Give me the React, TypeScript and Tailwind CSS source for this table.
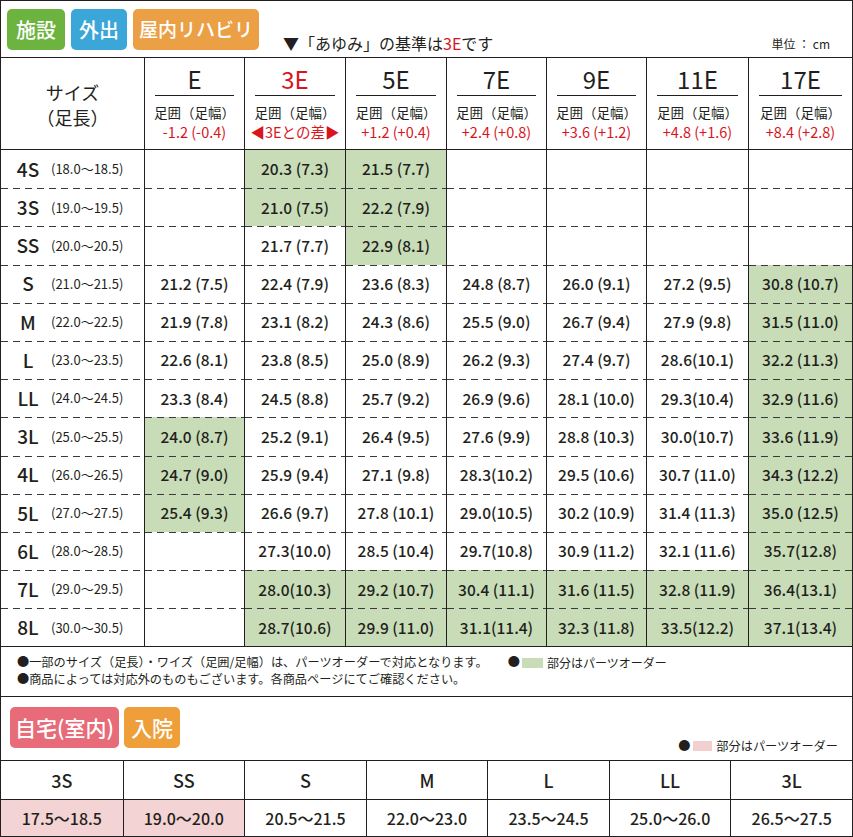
import React from "react";

const FONT = { fontFamily: '"Noto Sans CJK JP", "Noto Sans", sans-serif' };

const cols = ["E", "3E", "5E", "7E", "9E", "11E", "17E"];
const diffs = ["-1.2 (-0.4)", "◀3Eとの差▶", "+1.2 (+0.4)", "+2.4 (+0.8)", "+3.6 (+1.2)", "+4.8 (+1.6)", "+8.4 (+2.8)"];

type Cell = [string, boolean];
const rows: { size: string; range: string; cells: Cell[] }[] = [
  { size: "4S", range: "(18.0〜18.5)", cells: [["", false], ["20.3 (7.3)", true], ["21.5 (7.7)", true], ["", false], ["", false], ["", false], ["", false]] },
  { size: "3S", range: "(19.0〜19.5)", cells: [["", false], ["21.0 (7.5)", true], ["22.2 (7.9)", true], ["", false], ["", false], ["", false], ["", false]] },
  { size: "SS", range: "(20.0〜20.5)", cells: [["", false], ["21.7 (7.7)", false], ["22.9 (8.1)", true], ["", false], ["", false], ["", false], ["", false]] },
  { size: "S", range: "(21.0〜21.5)", cells: [["21.2 (7.5)", false], ["22.4 (7.9)", false], ["23.6 (8.3)", false], ["24.8 (8.7)", false], ["26.0 (9.1)", false], ["27.2 (9.5)", false], ["30.8 (10.7)", true]] },
  { size: "M", range: "(22.0〜22.5)", cells: [["21.9 (7.8)", false], ["23.1 (8.2)", false], ["24.3 (8.6)", false], ["25.5 (9.0)", false], ["26.7 (9.4)", false], ["27.9 (9.8)", false], ["31.5 (11.0)", true]] },
  { size: "L", range: "(23.0〜23.5)", cells: [["22.6 (8.1)", false], ["23.8 (8.5)", false], ["25.0 (8.9)", false], ["26.2 (9.3)", false], ["27.4 (9.7)", false], ["28.6(10.1)", false], ["32.2 (11.3)", true]] },
  { size: "LL", range: "(24.0〜24.5)", cells: [["23.3 (8.4)", false], ["24.5 (8.8)", false], ["25.7 (9.2)", false], ["26.9 (9.6)", false], ["28.1 (10.0)", false], ["29.3(10.4)", false], ["32.9 (11.6)", true]] },
  { size: "3L", range: "(25.0〜25.5)", cells: [["24.0 (8.7)", true], ["25.2 (9.1)", false], ["26.4 (9.5)", false], ["27.6 (9.9)", false], ["28.8 (10.3)", false], ["30.0(10.7)", false], ["33.6 (11.9)", true]] },
  { size: "4L", range: "(26.0〜26.5)", cells: [["24.7 (9.0)", true], ["25.9 (9.4)", false], ["27.1 (9.8)", false], ["28.3(10.2)", false], ["29.5 (10.6)", false], ["30.7 (11.0)", false], ["34.3 (12.2)", true]] },
  { size: "5L", range: "(27.0〜27.5)", cells: [["25.4 (9.3)", true], ["26.6 (9.7)", false], ["27.8 (10.1)", false], ["29.0(10.5)", false], ["30.2 (10.9)", false], ["31.4 (11.3)", false], ["35.0 (12.5)", true]] },
  { size: "6L", range: "(28.0〜28.5)", cells: [["", false], ["27.3(10.0)", false], ["28.5 (10.4)", false], ["29.7(10.8)", false], ["30.9 (11.2)", false], ["32.1 (11.6)", false], ["35.7(12.8)", true]] },
  { size: "7L", range: "(29.0〜29.5)", cells: [["", false], ["28.0(10.3)", true], ["29.2 (10.7)", true], ["30.4 (11.1)", true], ["31.6 (11.5)", true], ["32.8 (11.9)", true], ["36.4(13.1)", true]] },
  { size: "8L", range: "(30.0〜30.5)", cells: [["", false], ["28.7(10.6)", true], ["29.9 (11.0)", true], ["31.1(11.4)", true], ["32.3 (11.8)", true], ["33.5(12.2)", true], ["37.1(13.4)", true]] },
];

const bottom = [
  ["3S", "17.5〜18.5", true],
  ["SS", "19.0〜20.0", true],
  ["S", "20.5〜21.5", false],
  ["M", "22.0〜23.0", false],
  ["L", "23.5〜24.5", false],
  ["LL", "25.0〜26.0", false],
  ["3L", "26.5〜27.5", false],
] as const;

const dash =
  "bg-[image:repeating-linear-gradient(to_right,#3a3a3a_0px,#3a3a3a_7px,transparent_7px,transparent_12px)] bg-[length:100%_1px] bg-no-repeat bg-top";

const gridCols = "grid grid-cols-[143px_100px_101px_101px_100px_100px_102px_minmax(0,1fr)]";

export default function App() {
  return (
    <div style={FONT} className="w-[853px] h-[837px] bg-white text-[#231f20] overflow-hidden">
      <div className="w-[853px] h-[837px] border border-[#231f20] flex flex-col">
        {/* top tabs */}
        <div className="h-[56px] flex items-start px-[6px] pt-[8px] shrink-0">
          <div className="h-[41px] px-[9px] rounded-[5px] bg-[#6cb33f] text-white text-[20px] font-medium flex items-center">施設</div>
          <div className="h-[41px] px-[8px] ml-[6px] rounded-[5px] bg-[#3aa7d8] text-white text-[20px] font-medium flex items-center">外出</div>
          <div className="h-[41px] px-[6px] ml-[6px] rounded-[5px] bg-[#eba045] text-white text-[19px] font-medium flex items-center whitespace-nowrap">屋内リハビリ</div>
          <div className="ml-[24px] mt-[23px] text-[16px] leading-[22px] whitespace-nowrap">
            ▼「あゆみ」の基準は<span className="text-[#d9141c]">3E</span>です
          </div>
          <div className="ml-auto mr-[16px] mt-[27px] text-[12px] leading-[16px] whitespace-nowrap">単位 ： cm</div>
        </div>

        {/* main table */}
        <div className="border-t border-[#231f20] shrink-0">
          <div className={`${gridCols} h-[91px]`}>
            <div className="flex flex-col items-center justify-center pt-[3px] text-[18px] leading-[25px]">
              <div>サイズ</div>
              <div>（足長）</div>
            </div>
            {cols.map((c, i) => (
              <div key={c} className="border-l border-[#231f20] flex flex-col items-center px-[10px] pt-[6px]">
                <div className={`text-[24px] leading-[29px] ${i === 1 ? "text-[#d9141c]" : ""}`}>{c}</div>
                <div className="w-full h-px bg-[#231f20] mt-[2px]" />
                <div className="text-[13.5px] leading-[18px] mt-[7px] whitespace-nowrap">足囲（足幅）</div>
                <div className="text-[14.5px] leading-[18px] mt-[2px] text-[#d9141c] whitespace-nowrap">{diffs[i]}</div>
              </div>
            ))}
          </div>
          <div className="border-t border-[#231f20]">
            {rows.map((r, ri) => (
              <div key={r.size} className={`${gridCols} h-[38.2px]`}>
                <div className={`flex items-center ${ri > 0 ? dash : ""}`}>
                  <div className="w-[46px] pl-[8px] text-center text-[19px] font-medium">{r.size}</div>
                  <div className="text-[13px] ml-[4px] whitespace-nowrap">{r.range}</div>
                </div>
                {r.cells.map(([v, g], ci) => (
                  <div
                    key={ci}
                    className={`border-l border-[#231f20] flex items-center justify-center text-[15.5px] font-medium whitespace-pre ${g ? "bg-[#c8ddb7]" : ""} ${ri > 0 ? dash : ""}`}
                  >
                    {v}
                  </div>
                ))}
              </div>
            ))}
          </div>
        </div>

        {/* notes */}
        <div className="border-t border-[#231f20] h-[50px] shrink-0 pl-[16px] pt-[7px] text-[12.2px] leading-[17px]">
          <div className="flex items-center whitespace-nowrap">
            <span>●一部のサイズ（足長）・ワイズ（足囲/足幅）は、パーツオーダーで対応となります。</span>
            <span className="ml-[20px] flex items-center">
              ●<span className="inline-block w-[21px] h-[10px] bg-[#c8ddb7] ml-[2px] mr-[4px]" />
              <span className="text-[12px]">部分はパーツオーダー</span>
            </span>
          </div>
          <div className="whitespace-nowrap">●商品によっては対応外のものもございます。各商品ページにてご確認ください。</div>
        </div>

        {/* second tabs */}
        <div className="border-t border-[#231f20] h-[64px] shrink-0 flex items-start px-[9px] pt-[10px]">
          <div className="h-[41px] px-[5px] rounded-[5px] bg-[#e76b79] text-white text-[21px] font-medium flex items-center whitespace-nowrap">自宅(室内)</div>
          <div className="h-[41px] px-[7px] ml-[5px] rounded-[5px] bg-[#ee9f3a] text-white text-[21px] font-medium flex items-center">入院</div>
          <div className="ml-auto mr-[5px] mt-[31px] flex items-center text-[12.2px] leading-[16px] whitespace-nowrap">
            ●<span className="inline-block w-[19px] h-[10px] bg-[#f3cfcf] ml-[3px] mr-[4px]" />
            <span>部分はパーツオーダー</span>
          </div>
        </div>

        {/* bottom table */}
        <div className="border-t border-[#231f20] flex-1 flex flex-col">
          <div className="grid grid-cols-7 h-[38px]">
            {bottom.map(([s], i) => (
              <div key={s} className={`flex items-center justify-center text-[18px] font-medium ${i > 0 ? "border-l border-[#231f20]" : ""}`}>
                {s}
              </div>
            ))}
          </div>
          <div className="grid grid-cols-7 flex-1 border-t border-[#231f20]">
            {bottom.map(([s, r, p], i) => (
              <div
                key={s}
                className={`flex items-center justify-center text-[16px] font-medium ${p ? "bg-[#f3d3d3]" : ""} ${i > 0 ? "border-l border-[#231f20]" : ""}`}
              >
                {r}
              </div>
            ))}
          </div>
        </div>
      </div>
    </div>
  );
}
